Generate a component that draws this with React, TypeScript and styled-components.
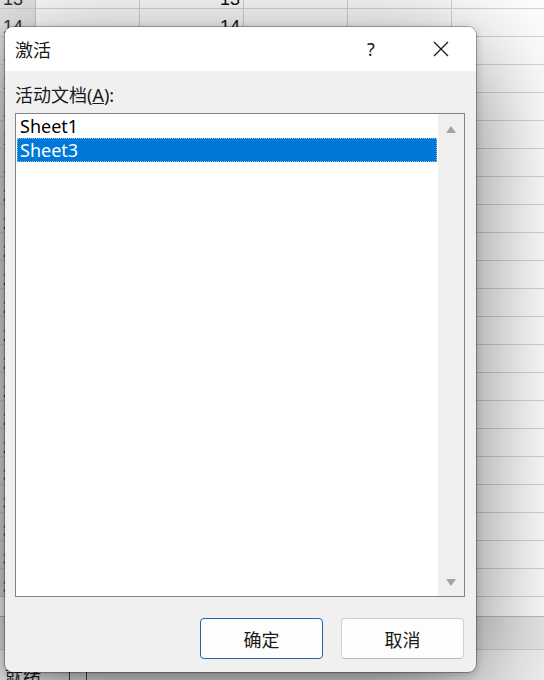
import React from "react";
import styled, { createGlobalStyle } from "styled-components";

const Global = createGlobalStyle`
  html, body { margin: 0; padding: 0; background: #ffffff; }
  body { width: 544px; height: 680px; overflow: hidden; font-family: "Noto Sans", "Noto Sans CJK SC", sans-serif; }
  #root { width: 544px; height: 680px; }
`;

const Page = styled.div`
  position: relative;
  width: 544px;
  height: 680px;
  overflow: hidden;
  background: #ffffff;
`;

const Sheet = styled.div`
  height: 636px;
  margin-top: -19px;
  overflow: hidden;
  border-bottom: 1px solid #bdbdbd;
  box-sizing: border-box;
`;

const Row = styled.div`
  display: flex;
  height: 28px;
  box-sizing: border-box;
`;

const RowHead = styled.div`
  flex: 0 0 36px;
  box-sizing: border-box;
  background: #e6e6e6;
  border-right: 1px solid #c6c6c6;
  border-bottom: 1px solid #d2d2d2;
  padding: 5px 0 0 3px;
  font-family: "Liberation Sans", "Noto Sans", sans-serif;
  font-size: 18px;
  line-height: 27px;
  color: #333333;
`;

const Cell = styled.div<{ $right?: boolean }>`
  flex: 0 0 104px;
  box-sizing: border-box;
  border-right: 1px solid #d6d6d6;
  border-bottom: 1px solid #d6d6d6;
  padding: 5px 3px 0 0;
  text-align: ${(p) => (p.$right ? "right" : "left")};
  font-family: "Liberation Sans", "Noto Sans", sans-serif;
  font-size: 18px;
  line-height: 27px;
  color: #111111;
`;

const TabBar = styled.div`
  height: 33px;
  background: #e9e9e9;
  border-bottom: 1px solid #d0d0d0;
  box-sizing: border-box;
`;

const StatusBar = styled.div`
  height: 50px;
  display: flex;
  align-items: center;
  gap: 28px;
  padding-left: 5px;
  background: #f3f3f3;
  font-family: "Noto Sans CJK SC", sans-serif;
  font-size: 18px;
  color: #222222;
`;

const MacroBox = styled.span`
  display: inline-block;
  width: 18px;
  height: 14px;
  border: 1px solid #444444;
  box-sizing: border-box;
`;

const Dialog = styled.div`
  position: absolute;
  left: 5px;
  top: 27px;
  width: 471px;
  height: 645px;
  box-sizing: border-box;
  border-radius: 8px;
  overflow: hidden;
  background: #f0f0f0;
  display: flex;
  flex-direction: column;
  box-shadow: 0 0 0 1px rgba(0, 0, 0, 0.28), 0 26px 110px rgba(0, 0, 0, 0.55),
    0 2px 10px rgba(0, 0, 0, 0.22);
  font-family: "Noto Sans", "Noto Sans CJK SC", sans-serif;
  font-size: 18px;
  color: #1a1a1a;
`;

const TitleBar = styled.div`
  height: 44px;
  flex: 0 0 44px;
  display: flex;
  align-items: center;
  background: #ffffff;
`;

const Title = styled.div`
  flex: 1;
  padding-left: 10px;
  font-family: "Noto Sans CJK SC", sans-serif;
  font-size: 18px;
  line-height: 44px;
  margin-top: -1px;
`;

const CaptionButton = styled.div`
  width: 70px;
  height: 44px;
  display: flex;
  align-items: center;
  justify-content: center;
  font-size: 18px;
  color: #1a1a1a;
`;

const Body = styled.div`
  flex: 1;
  display: flex;
  flex-direction: column;
  padding: 12px 11px 13px 10px;
`;

const Label = styled.div`
  height: 24px;
  line-height: 24px;
  font-size: 18px;
  margin-bottom: 6px;
`;

const ListBox = styled.div`
  height: 484px;
  box-sizing: border-box;
  border: 1px solid #838383;
  background: #ffffff;
  display: flex;
`;

const Items = styled.div`
  flex: 1;
  padding: 0 1px;
`;

const Item = styled.div<{ $selected?: boolean }>`
  height: 24px;
  line-height: 24px;
  padding-left: 3px;
  font-size: 18px;
  box-sizing: border-box;
  color: ${(p) => (p.$selected ? "#ffffff" : "#000000")};
  background: ${(p) => (p.$selected ? "#0078d7" : "transparent")};
  outline: ${(p) => (p.$selected ? "1px dotted rgba(255,255,255,0.55)" : "none")};
  outline-offset: -1px;
`;

const ScrollBar = styled.div`
  flex: 0 0 26px;
  background: #f0f0f0;
  display: flex;
  flex-direction: column;
  justify-content: space-between;
  align-items: center;
  padding: 12px 0 10px;
  box-sizing: border-box;
`;

const Buttons = styled.div`
  display: flex;
  justify-content: flex-end;
  gap: 18px;
  margin-top: 21px;
  padding-right: 1px;
`;

const Button = styled.div<{ $primary?: boolean }>`
  width: 123px;
  height: 41px;
  box-sizing: border-box;
  border-radius: 4px;
  background: #fdfdfd;
  border: 1px solid ${(p) => (p.$primary ? "#1a67b0" : "#d0d0d0")};
  ${(p) => (p.$primary ? "" : "border-bottom-color: #bcbcbc;")}
  display: flex;
  align-items: center;
  justify-content: center;
  font-family: "Noto Sans CJK SC", sans-serif;
  font-size: 18px;
  color: #1a1a1a;
`;

const rows = Array.from({ length: 22 }, (_, i) => 13 + i);

export default function App() {
  return (
    <>
      <Global />
      <Page>
        <Sheet>
          {rows.map((n) => (
            <Row key={n}>
              <RowHead>{n}</RowHead>
              <Cell />
              <Cell $right>{n}</Cell>
              <Cell />
              <Cell />
              <Cell />
            </Row>
          ))}
        </Sheet>
        <TabBar />
        <StatusBar>
          <span>就绪</span>
          <MacroBox />
        </StatusBar>
        <Dialog>
          <TitleBar>
            <Title>激活</Title>
            <CaptionButton>?</CaptionButton>
            <CaptionButton>
              <svg width="16" height="16" viewBox="0 0 16 16">
                <path d="M1 1 L15 15 M15 1 L1 15" stroke="#1a1a1a" strokeWidth="1.3" fill="none" />
              </svg>
            </CaptionButton>
          </TitleBar>
          <Body>
            <Label>
              活动文档(<u>A</u>):
            </Label>
            <ListBox>
              <Items>
                <Item>Sheet1</Item>
                <Item $selected>Sheet3</Item>
              </Items>
              <ScrollBar>
                <svg width="10" height="7" viewBox="0 0 10 7">
                  <path d="M5 0 L10 7 L0 7 Z" fill="#a3a3a3" />
                </svg>
                <svg width="10" height="7" viewBox="0 0 10 7">
                  <path d="M0 0 L10 0 L5 7 Z" fill="#a3a3a3" />
                </svg>
              </ScrollBar>
            </ListBox>
            <Buttons>
              <Button $primary>确定</Button>
              <Button>取消</Button>
            </Buttons>
          </Body>
        </Dialog>
      </Page>
    </>
  );
}
